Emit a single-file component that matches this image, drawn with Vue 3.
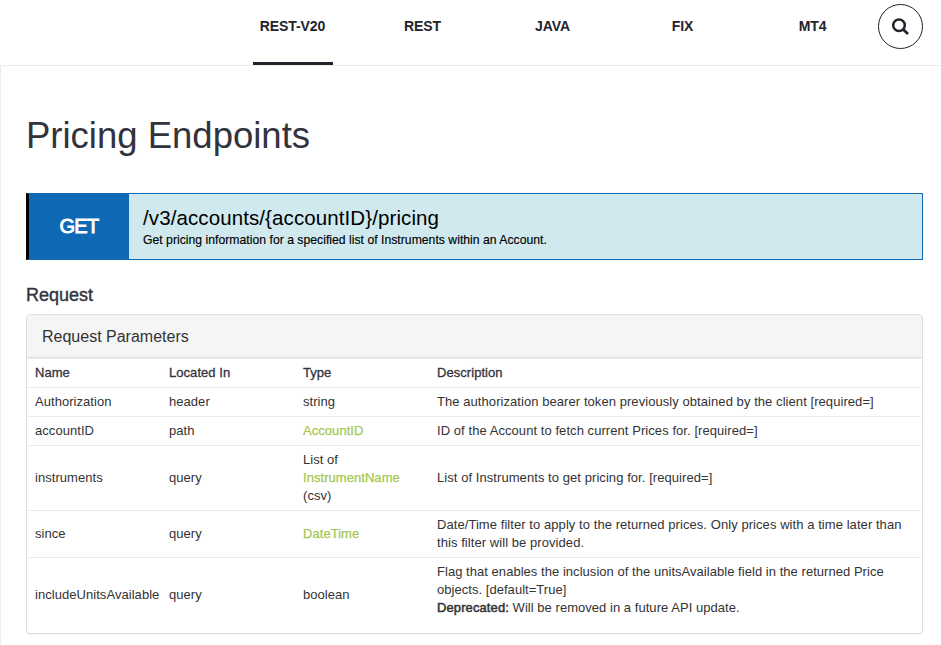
<script setup>
const tabs = [
  { label: 'REST-V20', active: true },
  { label: 'REST' },
  { label: 'JAVA' },
  { label: 'FIX' },
  { label: 'MT4' },
]

const rows = [
  { name: 'Authorization', located: 'header', type: 'string', lines: ['The authorization bearer token previously obtained by the client [required=]'] },
  { name: 'accountID', located: 'path', link: 'AccountID', lines: ['ID of the Account to fetch current Prices for. [required=]'] },
  { name: 'instruments', located: 'query', before: 'List of', link: 'InstrumentName', after: '(csv)', lines: ['List of Instruments to get pricing for. [required=]'] },
  { name: 'since', located: 'query', link: 'DateTime', lines: ['Date/Time filter to apply to the returned prices. Only prices with a time later than', 'this filter will be provided.'] },
  {
    name: 'includeUnitsAvailable',
    located: 'query',
    type: 'boolean',
    lines: ['Flag that enables the inclusion of the unitsAvailable field in the returned Price', 'objects. [default=True]'],
    deprecated: 'Will be removed in a future API update.',
  },
]
</script>

<template>
  <div class="page">
    <header class="topbar">
      <nav class="tabs">
        <a v-for="t in tabs" :key="t.label" class="tab" :class="{ active: t.active }"><span>{{ t.label }}</span></a>
      </nav>
      <button class="search" aria-label="Search">
        <svg width="17" height="17" viewBox="0 0 17 17" fill="none" stroke="#22232b">
          <circle cx="7" cy="7.2" r="5.8" stroke-width="2.5" />
          <path d="M11 11.2L16 16" stroke-width="2.7" />
        </svg>
      </button>
    </header>
    <main class="content">
      <h1><span>Pricing Endpoints</span></h1>
      <section class="endpoint">
        <div class="method"><span>GET</span></div>
        <div class="info">
          <div class="path"><span>/v3/accounts/{accountID}/pricing</span></div>
          <div class="summary"><span>Get pricing information for a specified list of Instruments within an Account.</span></div>
        </div>
      </section>
      <h2><span>Request</span></h2>
      <section class="panel">
        <div class="panel-head"><span>Request Parameters</span></div>
        <div class="table">
          <div class="row head">
            <div><span>Name</span></div>
            <div><span>Located In</span></div>
            <div><span>Type</span></div>
            <div><span>Description</span></div>
          </div>
          <div v-for="r in rows" :key="r.name" class="row">
            <div><span>{{ r.name }}</span></div>
            <div><span>{{ r.located }}</span></div>
            <div>
              <p v-if="r.type">{{ r.type }}</p>
              <p v-if="r.before">{{ r.before }}</p>
              <p v-if="r.link"><a class="link">{{ r.link }}</a></p>
              <p v-if="r.after">{{ r.after }}</p>
            </div>
            <div class="desc">
              <p v-for="l in r.lines" :key="l">{{ l }}</p>
              <p v-if="r.deprecated"><b>Deprecated:</b> {{ r.deprecated }}</p>
            </div>
          </div>
        </div>
      </section>
    </main>
  </div>
</template>

<style>
body {
  background: #fff;
  overflow: hidden;
}
</style>

<style scoped>
.page {
  width: 941px;
  height: 645px;
  overflow: hidden;
  box-sizing: border-box;
  font-family: "Liberation Sans", Arial, sans-serif;
  font-size: 13px;
  line-height: 18px;
  color: #333;
}
.topbar {
  display: flex;
  align-items: flex-start;
  box-sizing: border-box;
  height: 65px;
  padding: 0 18px 0 228px;
}
.tabs {
  display: flex;
  flex: 1;
}
.tab {
  display: flex;
  justify-content: center;
  box-sizing: border-box;
  width: 80px;
  height: 65px;
  margin: 0 25px;
  padding: 17px 1px 0 0;
  border-bottom: 3px solid transparent;
  font-size: 14px;
  font-weight: bold;
  letter-spacing: -0.1px;
  white-space: nowrap;
  color: #22232b;
}
.tab.active {
  border-bottom-color: #22232b;
}
.search {
  display: flex;
  align-items: center;
  justify-content: center;
  width: 45px;
  height: 45px;
  margin-top: 4px;
  padding: 0;
  border: 1px solid #22232b;
  border-radius: 50%;
  background: #fff;
}
.content {
  box-sizing: border-box;
  height: 580px;
  padding: 49px 18px 0 25px;
  border-top: 1px solid #ececec;
  border-left: 1px solid #ececec;
}
h1 {
  margin: 0 0 37px;
  font-size: 36.5px;
  line-height: 41px;
  font-weight: normal;
  color: #33333d;
}
.endpoint {
  display: flex;
  box-sizing: border-box;
  height: 67px;
  border: 1px solid #0f69b4;
  border-left: 3px solid #000;
  background: #cfe9ee;
  color: #000;
}
.method {
  display: flex;
  align-items: center;
  justify-content: center;
  box-sizing: border-box;
  width: 100px;
  padding-bottom: 2px;
  background: #0f69b4;
  color: #fff;
  font-size: 20px;
  letter-spacing: -0.7px;
  -webkit-text-stroke: 0.9px #fff;
}
.info {
  padding: 12px 14px 0;
}
.path {
  font-size: 20.5px;
  line-height: 24px;
  letter-spacing: 0.1px;
}
.summary {
  padding-top: 1px;
  font-size: 12.2px;
  line-height: 18px;
  letter-spacing: 0.02px;
  -webkit-text-stroke: 0.15px #000;
}
h2 {
  margin: 25px 0 9px;
  font-size: 18px;
  line-height: 20px;
  font-weight: normal;
  color: #33333d;
  -webkit-text-stroke: 0.4px #33333d;
}
.panel {
  box-sizing: border-box;
  height: 320px;
  border: 1px solid #ddd;
  border-radius: 4px;
  box-shadow: 0 1px 1px rgba(0, 0, 0, 0.05);
}
.panel-head {
  height: 42px;
  padding-left: 15px;
  border-bottom: 1px solid #ddd;
  border-radius: 3px 3px 0 0;
  background: #f5f5f5;
  font-size: 16px;
  line-height: 43px;
}
.table {
  margin-right: 1px;
  letter-spacing: 0.05px;
}
.row {
  display: grid;
  grid-template-columns: 134px 134px 134px 1fr;
  align-items: center;
  padding: 5px 0;
  border-top: 1px solid #ececec;
}
.row > div {
  padding-left: 8px;
  white-space: nowrap;
}
.row:last-child .desc {
  padding-bottom: 10px;
  letter-spacing: 0.04px;
}
.desc {
  letter-spacing: 0.065px;
}
.desc b {
  font-weight: normal;
  letter-spacing: 0.1px;
  -webkit-text-stroke: 0.5px #333;
}
.head {
  color: #33333d;
  -webkit-text-stroke: 0.3px #33333d;
}
p {
  margin: 0;
}
.link {
  color: #a4c851;
  -webkit-text-stroke: 0.25px #a4c851;
}
</style>
